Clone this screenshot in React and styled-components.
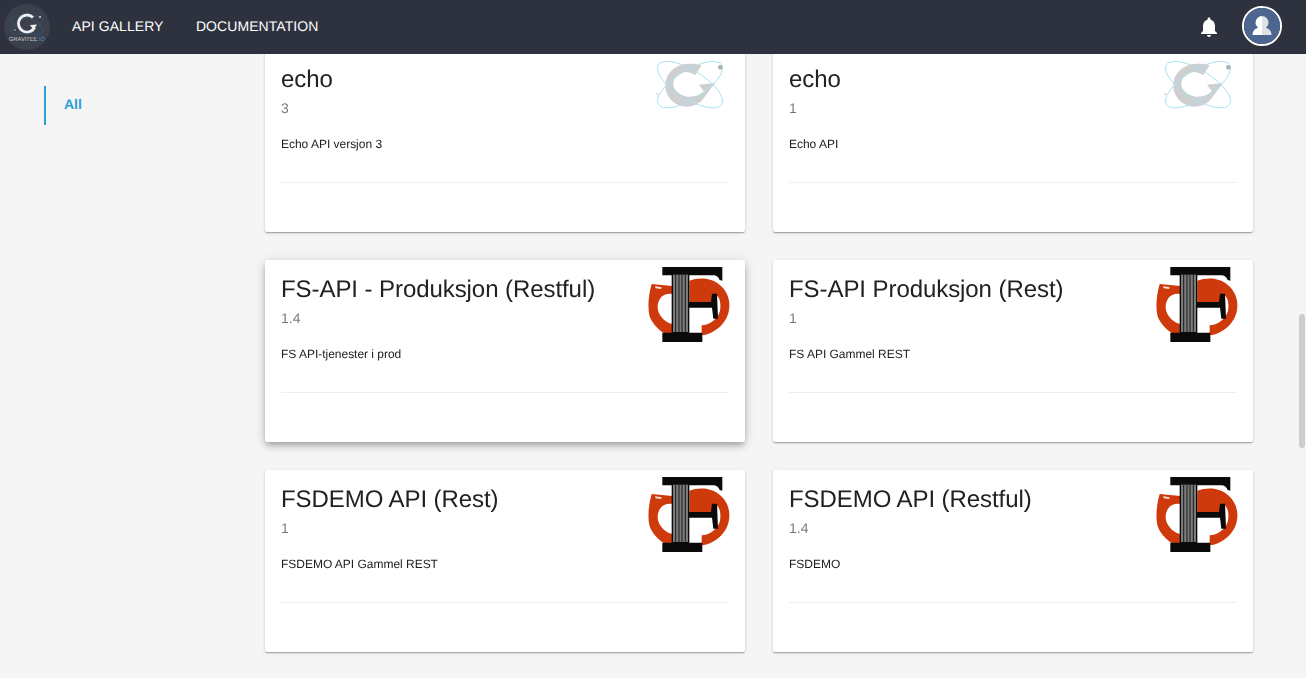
import React from "react";
import styled, { createGlobalStyle } from "styled-components";

const Global = createGlobalStyle`
  html, body { margin: 0; padding: 0; height: 100%; overflow: hidden; background: #f5f5f5; }
  body { font-family: "Liberation Sans", Arial, sans-serif; color: #212121; text-rendering: geometricPrecision; }
`;

const Page = styled.div`
  position: relative;
  height: 678px;
  overflow: hidden;
  display: flex;
  flex-direction: column;
  background: #f5f5f5;
`;

const Header = styled.header`
  position: relative;
  z-index: 2;
  flex: none;
  height: 54px;
  background: #2e323f;
  display: flex;
  align-items: center;
  padding: 0 24px 0 4px;
`;

const Brand = styled.div`
  width: 46px;
  height: 46px;
  margin-right: 22px;
  flex: none;
`;

const NavLink = styled.a`
  color: #fff;
  font-size: 14px;
  letter-spacing: 0.06px;
  line-height: 52px;
  margin-top: -2px;
  text-transform: uppercase;
  margin-right: 32.5px;
  white-space: nowrap;
`;

const Spacer = styled.div`
  flex: 1;
`;

const BellButton = styled.div`
  width: 24px;
  height: 24px;
  margin-right: 21px;
  color: #fff;
`;

const Avatar = styled.div`
  width: 40px;
  height: 40px;
  border: 2px solid #fff;
  border-radius: 50%;
  overflow: hidden;
  box-sizing: border-box;
  flex: none;
  margin-top: -2px;
`;

const Body = styled.main`
  flex: 1;
  min-height: 0;
  display: flex;
  overflow: hidden;
`;

const Sidebar = styled.nav`
  flex: none;
  width: 265px;
  padding: 32px 0 0 44px;
  box-sizing: border-box;
`;

const Category = styled.a`
  display: block;
  height: 39px;
  line-height: 36px;
  padding-left: 18px;
  border-left: 2px solid #2e9fd8;
  font-size: 14px;
  font-weight: 700;
  color: #2e9fd8;
`;

const Grid = styled.section`
  flex: none;
  width: 988px;
  margin-top: -4px;
  display: grid;
  grid-template-columns: 480px 480px;
  grid-auto-rows: 182px;
  column-gap: 28px;
  row-gap: 28px;
  align-content: start;
`;

const Card = styled.article`
  position: relative;
  background: #fff;
  border-radius: 2px;
  padding: 16px 16px 0;
  box-sizing: border-box;
  will-change: transform;
  box-shadow: ${(p) =>
    p.$raised
      ? "0 3px 5px -1px rgba(0,0,0,.2), 0 5px 8px 0 rgba(0,0,0,.14), 0 1px 14px 0 rgba(0,0,0,.12)"
      : "0 1px 3px 0 rgba(0,0,0,.2), 0 1px 1px 0 rgba(0,0,0,.14), 0 2px 1px -1px rgba(0,0,0,.12)"};
`;

const Title = styled.h2`
  margin: 0;
  font-size: 24px;
  font-weight: 400;
  line-height: 28px;
  letter-spacing: -0.07px;
  color: #212121;
`;

const Version = styled.div`
  margin-top: 6px;
  font-size: 14px;
  line-height: 16px;
  color: rgba(0, 0, 0, 0.54);
`;

const Description = styled.p`
  margin: 20px 0 0;
  font-size: 12px;
  line-height: 16px;
  letter-spacing: -0.02px;
  color: #212121;
`;

const Divider = styled.hr`
  margin: 30px 0 0;
  border: 0;
  border-top: 1px solid #eeeeee;
`;

const LogoSlot = styled.div`
  position: absolute;
  top: ${(p) => p.$top}px;
  right: ${(p) => p.$right}px;
  line-height: 0;
  filter: blur(0.35px);
`;

const ScrollThumb = styled.div`
  position: absolute;
  z-index: 3;
  top: 314px;
  right: 1px;
  width: 6px;
  height: 134px;
  border-radius: 3px;
  background: #cdcdcd;
`;

const BrandLogo = () => (
  <svg width="46" height="46" viewBox="0 0 46 46">
    <circle cx="23" cy="23" r="23" fill="#3b404c" />
    <ellipse cx="23" cy="21" rx="17" ry="7" fill="none" stroke="#34566e" strokeWidth=".8" transform="rotate(22 23 21)" />
    <ellipse cx="23" cy="21" rx="17" ry="7" fill="none" stroke="#34566e" strokeWidth=".8" transform="rotate(-22 23 21)" />
    <path d="M29 13.500A8.500 8.500 0 1 0 30.500 23.500" fill="none" stroke="#eceef0" strokeWidth="2.800" />
    <path d="M33 20.500L26 21L29.500 26Z" fill="#eceef0" />
    <circle cx="36" cy="13" r="1" fill="#d8d8d8" />
    <circle cx="11" cy="26" r=".7" fill="#d8d8d8" />
    <text x="23" y="37.300" textAnchor="middle" fontSize="6" textLength="36" lengthAdjust="spacingAndGlyphs" fontFamily="Liberation Sans, sans-serif" fill="#c9cbcf">
      GRAVITEE<tspan fill="#3a93c4">.IO</tspan>
    </text>
  </svg>
);

const Bell = () => (
  <svg width="24" height="24" viewBox="0 0 24 24" fill="currentColor">
    <path d="M12 22c1.100 0 2-.9 2-2h-4c0 1.100.9 2 2 2zm6-6v-5c0-3.070-1.630-5.640-4.500-6.320V4c0-.83-.67-1.500-1.500-1.500s-1.500.67-1.500 1.500v.68C7.640 5.360 6 7.920 6 11v5l-2 2v1h16v-1l-2-2z" />
  </svg>
);

const Person = () => (
  <svg width="36" height="36" viewBox="0 0 36 36">
    <rect width="36" height="36" fill="#4c6690" />
    <path d="M18 8a6.500 6.500 0 0 0-6.500 6.500c0 2 .9 3.700 2.600 5.200C11 20.500 8.500 23 8.500 27H18z" fill="#fff" />
    <path d="M18 8a6.500 6.500 0 0 1 6.500 6.500c0 2-.9 3.700-2.600 5.200C25 20.500 27.500 23 27.500 27H18z" fill="#dfe2e6" />
  </svg>
);

const EchoLogo = () => (
  <svg width="80" height="52" viewBox="0 0 240 156">
    <path d="M155 22C140 17 125 16 108 18C70 22 46 50 46 82C46 118 75 146 110 146C132 146 152 136 163 118L195 75L147 80L161 100C150 112 130 118 112 116C90 112 70 98 70 78C70 58 88 42 108 42C118 42 128 46 135 52Z" fill="#cfcfcf" />
    <ellipse cx="120" cy="80" rx="112" ry="43" fill="none" stroke="#a6e0f2" strokeWidth="2.600" transform="rotate(32 120 80)" />
    <ellipse cx="120" cy="80" rx="112" ry="43" fill="none" stroke="#a6e0f2" strokeWidth="2.600" transform="rotate(-32 120 80)" />
    <circle cx="211" cy="28" r="7" fill="#b0b0b0" />
    <circle cx="22" cy="108" r="3" fill="#cfcfcf" />
  </svg>
);

const FsLogo = () => (
  <svg width="88" height="84" viewBox="0 0 264 252">
    <path d="M20 66L82 72V96C68 94 52 98 45 110C36 124 36 142 43 155C52 172 66 182 82 186V226C50 214 22 190 13 160C8 135 10 100 20 66Z" fill="#cf3a0c" />
    <path d="M30 73L50 76L48 81L32 79Z" fill="#f6e6df" />
    <path d="M133 56C165 44 205 46 232 76C250 96 256 120 252 144C246 184 208 216 170 220V190C192 188 218 174 225 146C228 128 226 108 214 100L198 122H133Z" fill="#cf3a0c" />
    <path d="M52 15H232V56L224 54C221 46 214 40 205 40H133V120H198L201 95H216L219 170H205L201 137H133V212H172V240H52V212H80V40H52Z" fill="#0a0a0a" />
    <path d="M84 38H129V210H84Z" fill="#7a7a7a" />
    <path d="M92 38V210M102 38V210M111 38V210M121 38V210" stroke="#161616" strokeWidth="2.800" />
  </svg>
);

const cards = [
  { title: "echo", version: "3", description: "Echo API versjon 3", logo: "echo" },
  { title: "echo", version: "1", description: "Echo API", logo: "echo" },
  { title: "FS-API - Produksjon (Restful)", version: "1.4", description: "FS API-tjenester i prod", logo: "fs", raised: true },
  { title: "FS-API Produksjon (Rest)", version: "1", description: "FS API Gammel REST", logo: "fs" },
  { title: "FSDEMO API (Rest)", version: "1", description: "FSDEMO API Gammel REST", logo: "fs" },
  { title: "FSDEMO API (Restful)", version: "1.4", description: "FSDEMO", logo: "fs" },
];

export default function App() {
  return (
    <Page>
      <Global />
      <Header>
        <Brand><BrandLogo /></Brand>
        <NavLink>API Gallery</NavLink>
        <NavLink>Documentation</NavLink>
        <Spacer />
        <BellButton><Bell /></BellButton>
        <Avatar><Person /></Avatar>
      </Header>
      <Body>
        <Sidebar>
          <Category>All</Category>
        </Sidebar>
        <Grid>
          {cards.map((c, i) => (
            <Card key={i} $raised={c.raised}>
              <Title>{c.title}</Title>
              <Version>{c.version}</Version>
              <Description>{c.description}</Description>
              <Divider />
              {c.logo === "echo" ? (
                <LogoSlot $top={8} $right={15}><EchoLogo /></LogoSlot>
              ) : (
                <LogoSlot $top={2} $right={12}><FsLogo /></LogoSlot>
              )}
            </Card>
          ))}
        </Grid>
      </Body>
      <ScrollThumb />
    </Page>
  );
}
